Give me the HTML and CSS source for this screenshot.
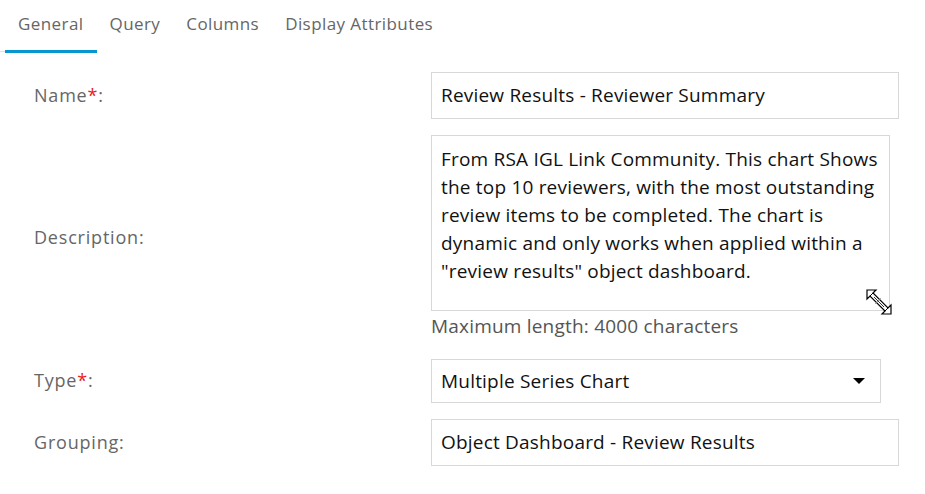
FILE: index.html
```html
<!DOCTYPE html>
<html>
<head>
<meta charset="utf-8">
<link rel="stylesheet" href="styles.css">
</head>
<body>
<div class="tabs">
  <div class="tab active">General</div>
  <div class="tab">Query</div>
  <div class="tab">Columns</div>
  <div class="tab">Display Attributes</div>
</div>
<div class="form">
  <div class="row">
    <div class="label">Name<span class="req">*</span>:</div>
    <div class="field"><div class="input wide">Review Results - Reviewer Summary</div></div>
  </div>
  <div class="row">
    <div class="label">Description:</div>
    <div class="field">
      <div class="textarea">From RSA IGL Link Community. This chart Shows<br>the top 10 reviewers, with the most outstanding<br>review items to be completed. The chart is<br>dynamic and only works when applied within a<br>"review results" object dashboard.
        <svg class="cursor" width="28" height="28" viewBox="0 0 28 28">
          <path d="M2 2 L11 2 L8 5 L23 20 L26 17 L26 26 L17 26 L20 23 L5 8 L2 11 Z" fill="#fff" stroke="#000" stroke-width="1.2" stroke-linejoin="miter"/>
          <path d="M8 5 L5 8 M23 20 L20 23" stroke="#000" stroke-width="1"/>
          <path d="M9 9 L19 19" stroke="#000" stroke-width="0.8"/>
          <path d="M10 16 L16 10" stroke="#888" stroke-width="0.7"/>
        </svg>
      </div>
      <div class="help">Maximum length: 4000 characters</div>
    </div>
  </div>
  <div class="row">
    <div class="label">Type<span class="req">*</span>:</div>
    <div class="field"><div class="input select">Multiple Series Chart<span class="caret"></span></div></div>
  </div>
  <div class="row">
    <div class="label">Grouping:</div>
    <div class="field"><div class="input wide">Object Dashboard - Review Results</div></div>
  </div>
</div>
</body>
</html>
```

FILE: styles.css
```css
html, body {
  margin: 0;
  padding: 0;
  background: #fff;
  font-family: "Open Sans", "Noto Sans", sans-serif;
}
.tabs {
  display: flex;
  padding-left: 5px;
  height: 53px;
  position: relative;
}
.tabs::before {
  content: "";
  position: absolute;
  left: 0;
  width: 5px;
  bottom: 1px;
  height: 1px;
  background: #e2e2e2;
}
.tab {
  padding: 0 13px;
  font-size: 17px;
  color: #666;
  line-height: 48px;
  height: 50px;
  letter-spacing: 0.42px;
  border-bottom: 3px solid transparent;
}
.tab.active {
  border-bottom-color: #0896d0;
}
.form {
  padding-left: 34px;
  padding-top: 19px;
}
.row {
  display: flex;
  align-items: center;
  margin-bottom: 16px;
}
.row:nth-child(2) {
  margin-bottom: 19px;
}
.label {
  width: 397px;
  font-size: 18px;
  color: #666;
  letter-spacing: 0.8px;
  margin-top: -2px;
}
.req {
  color: #e8201c;
}
.field {
  display: flex;
  flex-direction: column;
}
.input {
  box-sizing: border-box;
  border: 1px solid #d8d8d8;
  height: 47px;
  padding: 0 9px;
  font-size: 19px;
  letter-spacing: 0.2px;
  color: #111;
  line-height: 45px;
  white-space: nowrap;
}
.input.wide {
  width: 468px;
}
.input.select {
  width: 450px;
  height: 44px;
  line-height: 42px;
  display: flex;
  justify-content: space-between;
  align-items: center;
}
.caret {
  width: 0;
  height: 0;
  border-left: 6px solid transparent;
  border-right: 6px solid transparent;
  border-top: 6px solid #000;
  margin-right: 6px;
}
.textarea {
  position: relative;
  box-sizing: border-box;
  width: 459px;
  height: 176px;
  border: 1px solid #d8d8d8;
  padding: 9px 9px;
  font-size: 19px;
  letter-spacing: 0.2px;
  line-height: 28px;
  color: #111;
  white-space: nowrap;
}
.cursor {
  position: absolute;
  right: -4px;
  bottom: -6px;
}
.help {
  font-size: 19px;
  letter-spacing: 0.2px;
  color: #555;
  line-height: 28px;
  margin-top: 1px;
}
```
